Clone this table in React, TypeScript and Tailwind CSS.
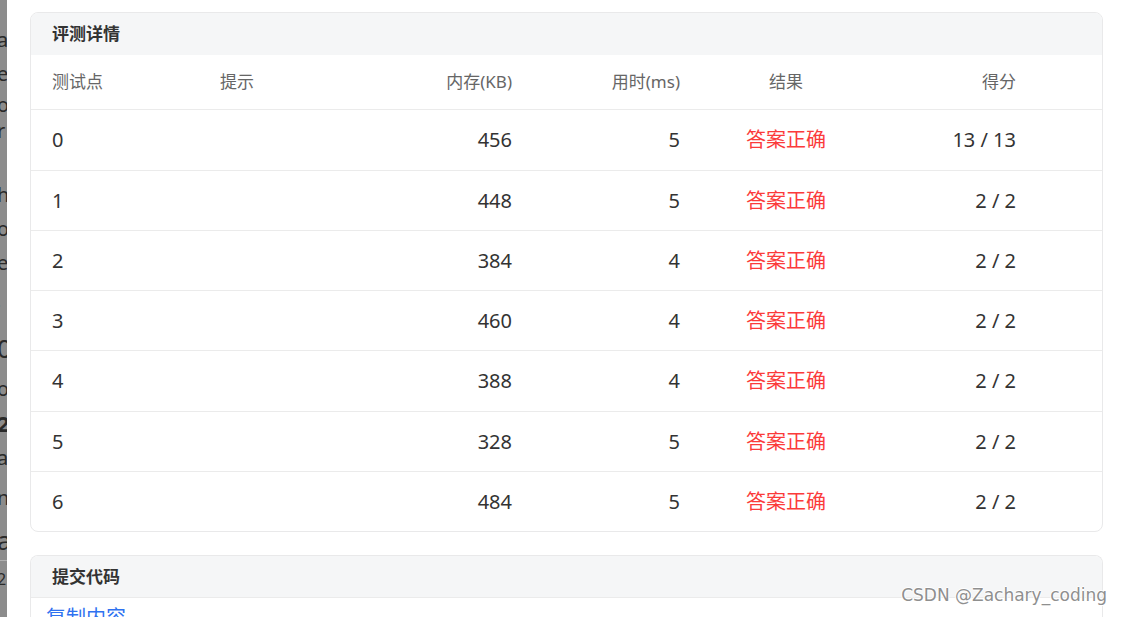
import React from "react";

const rows = [
  { id: "0", mem: "456", time: "5", score: "13 / 13", h: "h-[61px]" },
  { id: "1", mem: "448", time: "5", score: "2 / 2", h: "h-[60px]" },
  { id: "2", mem: "384", time: "4", score: "2 / 2", h: "h-[60px]" },
  { id: "3", mem: "460", time: "4", score: "2 / 2", h: "h-[60px]" },
  { id: "4", mem: "388", time: "4", score: "2 / 2", h: "h-[61px]" },
  { id: "5", mem: "328", time: "5", score: "2 / 2", h: "h-[60px]" },
  { id: "6", mem: "484", time: "5", score: "2 / 2", h: "h-[59px]" },
];

const stripLines: { h: string; c: string; cls: string }[] = [
  { h: "h-[22px]", c: "", cls: "" },
  { h: "h-[36px]", c: "a", cls: "text-[20px]" },
  { h: "h-[32px]", c: "e", cls: "text-[20px]" },
  { h: "h-[30px]", c: "o", cls: "text-[20px]" },
  { h: "h-[22px]", c: "r", cls: "text-[20px]" },
  { h: "h-[36px]", c: "'", cls: "text-[14px]" },
  { h: "h-[34px]", c: "h", cls: "text-[20px]" },
  { h: "h-[34px]", c: "o", cls: "text-[20px]" },
  { h: "h-[34px]", c: "e", cls: "text-[20px]" },
  { h: "h-[44px]", c: ".", cls: "text-[14px]" },
  { h: "h-[48px]", c: "0", cls: "text-[26px]" },
  { h: "h-[34px]", c: "o", cls: "text-[20px]" },
  { h: "h-[34px]", c: "2", cls: "text-[22px] font-bold" },
  { h: "h-[36px]", c: "a", cls: "text-[20px]" },
  { h: "h-[44px]", c: "n", cls: "text-[20px]" },
  { h: "h-[40px]", c: "a", cls: "text-[26px]" },
];

const cols = "grid-cols-[168px_180px_112px_168px_212px_124px_1fr]";

export default function App() {
  const font = {
    fontFamily:
      '"Noto Sans", Inter, "Noto Sans CJK SC", "Liberation Sans", sans-serif',
  };
  return (
    <div
      className="relative flex h-[617px] w-[1122px] overflow-hidden bg-white"
      style={font}
    >
      {/* clipped neighbour window */}
      <div className="flex w-[7px] shrink-0 flex-col overflow-hidden bg-[#8c8c8c] text-[#2a2a2a]">
        {stripLines.map((l, i) => (
          <div
            key={i}
            className={`${l.h} ${l.cls} ml-[-3px] flex shrink-0 items-center leading-none`}
          >
            {l.c}
          </div>
        ))}
        <div className="h-[1px] shrink-0 bg-[#b0b0b0]" />
        <div className="ml-[-3px] mt-[10px] text-[16px] leading-none">2</div>
      </div>

      <div className="flex flex-1 flex-col gap-[23px] pl-[23px] pr-[19px] pt-[12px]">
        {/* card 1 */}
        <div className="overflow-hidden rounded-[8px] border border-[#e9e9ea] bg-white">
          <div className="flex h-[42px] items-center bg-[#f5f6f7] pl-[21px] text-[17px] font-bold text-[#333]">
            评测详情
          </div>
          <div
            className={`grid h-[55px] ${cols} items-center border-b border-[#ebebeb] pl-[21px] text-[17px] text-[#666]`}
          >
            <div>测试点</div>
            <div>提示</div>
            <div className="text-right">内存(KB)</div>
            <div className="text-right">用时(ms)</div>
            <div className="text-center">结果</div>
            <div className="text-right">得分</div>
            <div />
          </div>
          {rows.map((r, i) => (
            <div
              key={r.id}
              className={`grid ${r.h} ${cols} items-center pl-[21px] text-[20px] text-[#333] ${
                i < rows.length - 1 ? "border-b border-[#ebebeb]" : ""
              }`}
            >
              <div>{r.id}</div>
              <div />
              <div className="text-right">{r.mem}</div>
              <div className="text-right">{r.time}</div>
              <div className="text-center text-[#fb3b3b]">答案正确</div>
              <div className="text-right">{r.score}</div>
              <div />
            </div>
          ))}
        </div>

        {/* card 2 */}
        <div className="flex-1 overflow-hidden rounded-t-[8px] border border-b-0 border-[#e9e9ea] bg-white">
          <div className="flex h-[42px] items-center border-b border-[#ebebeb] bg-[#f5f6f7] pl-[21px] text-[17px] font-bold text-[#333]">
            提交代码
          </div>
          <div className="pl-[15px] pt-[10px] text-[20px] leading-none text-[#2f72f0]">
            复制内容
          </div>
        </div>
      </div>

      {/* watermark */}
      <div
        className="absolute bottom-[9px] right-[15px] text-[17px] text-[#8f8f8f]"
        style={{
          fontFamily: '"DejaVu Sans", Verdana, sans-serif',
          textShadow:
            "1px 0 0 #fff, -1px 0 0 #fff, 0 1px 0 #fff, 0 -1px 0 #fff",
        }}
      >
        CSDN @Zachary_coding
      </div>
    </div>
  );
}
